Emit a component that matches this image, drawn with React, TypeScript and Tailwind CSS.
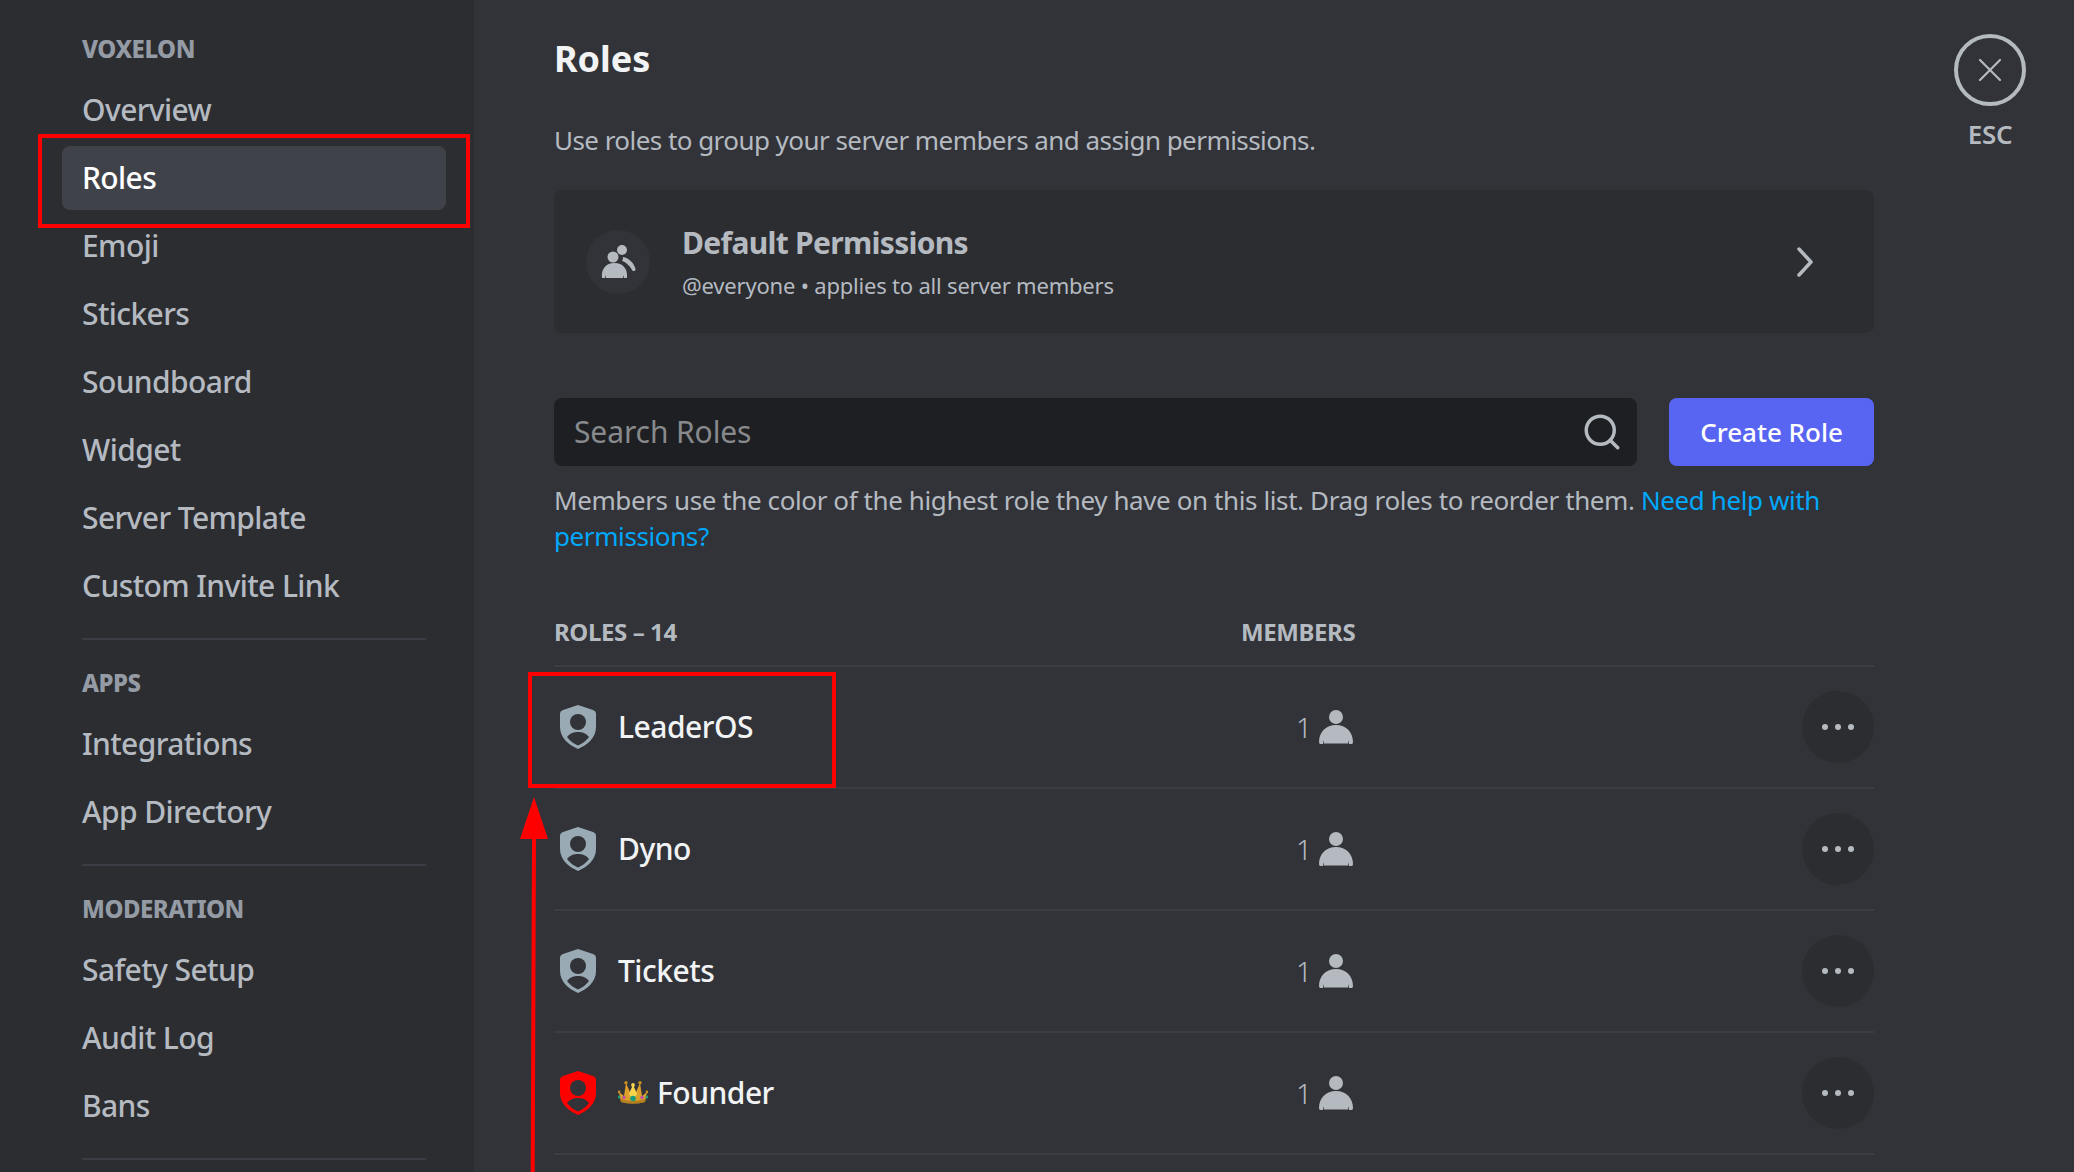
import { Search, X } from 'lucide-react';

const fontStack = 'font-["Noto_Sans","Open_Sans",sans-serif]';

const sections = [
  { title: 'VOXELON', items: ['Overview', 'Roles', 'Emoji', 'Stickers', 'Soundboard', 'Widget', 'Server Template', 'Custom Invite Link'] },
  { title: 'APPS', items: ['Integrations', 'App Directory'] },
  { title: 'MODERATION', items: ['Safety Setup', 'Audit Log', 'Bans'] },
];

const roles = [
  { name: 'LeaderOS', color: '#99aab5' },
  { name: 'Dyno', color: '#99aab5' },
  { name: 'Tickets', color: '#99aab5' },
  { name: 'Founder', color: '#ff0000', crown: true },
];

function Shield({ color }: { color: string }) {
  return (
    <svg width="36" height="44" viewBox="0 0 36 44" className="shrink-0">
      <path d="M18 0 L33 5 Q36 6 36 9 V22 C36 33 27 40 18 44 C9 40 0 33 0 22 V9 Q0 6 3 5 Z" fill={color} />
      <circle cx="18" cy="17" r="8" fill="#313338" />
      <path d="M7 32 C10 28 14 27 18 27 C22 27 26 28 29 32 C26 36 22 39 18 40.5 C14 39 10 36 7 32 Z" fill="#313338" />
    </svg>
  );
}

function Crown() {
  return (
    <svg width="30" height="23" viewBox="0 0 30 23" className="shrink-0">
      <path d="M1 11 L6 15 L8 2 L12 11 L15 4 L18 11 L22 2 L24 15 L29 11 L27 21 Q15 24 3 21 Z" fill="#dca02a" />
      <path d="M15 4 L19 13 L15 19 L11 13 Z" fill="#f7d64e" />
      <path d="M2.5 18 Q15 22 27.5 18 L27 21 Q15 24 3 21 Z" fill="#b47f1e" />
      <circle cx="15" cy="17.5" r="2.8" fill="#1c9c7c" />
      <circle cx="6" cy="16.5" r="1.7" fill="#c34fa8" />
      <circle cx="24" cy="16.5" r="1.7" fill="#c34fa8" />
      <circle cx="1" cy="16" r="1.5" fill="#1c9c7c" />
      <circle cx="29" cy="16" r="1.5" fill="#1c9c7c" />
      <circle cx="15" cy="4" r="1.9" fill="#f7d64e" />
      <circle cx="8" cy="1.8" r="1.7" fill="#c98f1f" />
      <circle cx="22" cy="1.8" r="1.7" fill="#c98f1f" />
      <circle cx="1" cy="11" r="1.4" fill="#c98f1f" />
      <circle cx="29" cy="11" r="1.4" fill="#c98f1f" />
    </svg>
  );
}

function Person() {
  return (
    <svg width="34" height="34" viewBox="0 0 34 34" className="shrink-0">
      <circle cx="17" cy="7" r="7" fill="#b5bac1" />
      <path d="M0 32 C0 22 7 15 17 15 C27 15 34 22 34 32 Q34 34 32.5 34 L30 34 L29.5 30 L29 33.5 H5 L4.5 30 L4 34 L1.5 34 Q0 34 0 32 Z" fill="#b5bac1" />
    </svg>
  );
}

// drawn in the 64px circle's own coordinates
function People() {
  return (
    <svg width="64" height="64" viewBox="0 0 64 64">
      <circle cx="27" cy="27" r="5.5" fill="#b5bac1" />
      <circle cx="36" cy="20" r="5" fill="#b5bac1" />
      <path d="M16 48 C15 39 20 33 28.5 33 C37 33 42 39 41 48 H38 L37.5 45 L37 48 H20 L19.5 45 L19 48 Z" fill="#b5bac1" />
      <path d="M37 27 C43 28 48 33 49.5 39 C50 41 47 42 46 40 C44 36 40 32 36 31 C37 30 37 28 37 27 Z" fill="#b5bac1" />
    </svg>
  );
}

export default function App() {
  return (
    <div className={`relative flex h-[1172px] w-[2074px] overflow-hidden bg-[#313338] ${fontStack}`}>
      {/* sidebar */}
      <div className="w-[474px] shrink-0 bg-[#2b2d31] pl-[62px] pt-[32px]">
        <div className="w-[384px]">
          {sections.map((s) => (
            <div key={s.title} className="mb-[26px]">
              <div className="mb-[12px] flex h-[34px] items-center pl-[20px] text-[24px] font-extrabold tracking-[-0.5px] text-[#949ba4]">{s.title}</div>
              {s.items.map((item) => (
                <div
                  key={item}
                  className={
                    item === 'Roles'
                      ? 'mb-[4px] flex h-[64px] items-center rounded-lg bg-[#404249] px-[20px] pb-[2px] text-[30px] font-medium tracking-[-0.6px] text-white'
                      : 'mb-[4px] flex h-[64px] items-center px-[20px] pb-[2px] text-[30px] font-medium tracking-[-0.6px] text-[#b5bac1]'
                  }
                >
                  {item}
                </div>
              ))}
              <div className="mx-[20px] mt-[20px] h-[2px] bg-[#3b3d44]" />
            </div>
          ))}
        </div>
      </div>

      {/* main */}
      <div className="ml-[80px] w-[1320px] shrink-0 pt-[37px]">
        <div className="flex h-[44px] items-center text-[36px] font-bold text-[#f2f3f5]">Roles</div>
        <div className="mt-[39px] flex h-[40px] items-center text-[26px] tracking-[-0.55px] text-[#b5bac1]">Use roles to group your server members and assign permissions.</div>

        <div className="mt-[30px] flex h-[143px] items-center rounded-lg bg-[#2b2d31] pl-[32px] pr-[61px]">
          <div className="flex h-[64px] w-[64px] shrink-0 items-center justify-center rounded-full bg-[#313338]">
            <People />
          </div>
          <div className="ml-[32px] flex-1">
            <div className="text-[30px] font-bold leading-[40px] tracking-[-0.7px] text-[#b5bac1]">Default Permissions</div>
            <div className="mt-[6px] text-[22px] leading-[32px] tracking-[-0.2px] text-[#b5bac1]">@everyone • applies to all server members</div>
          </div>
          <svg width="16" height="30" viewBox="0 0 16 30" fill="none" className="shrink-0">
            <path d="M2 2 L14 15 L2 28" stroke="#b5bac1" strokeWidth="3.5" strokeLinecap="round" strokeLinejoin="round" />
          </svg>
        </div>

        <div className="mt-[65px] flex h-[68px] gap-[32px]">
          <div className="flex flex-1 items-center rounded-lg bg-[#1e1f22] pl-[20px] pr-[14px]">
            <span className="flex-1 pb-[2px] text-[30px] tracking-[-0.1px] text-[#87898c]">Search Roles</span>
            <Search size={42} strokeWidth={2} className="text-[#b5bac1]" />
          </div>
          <div className="flex w-[205px] items-center justify-center rounded-lg bg-[#5865f2] text-[26px] font-medium text-white">Create Role</div>
        </div>

        <div className="mt-[16px] text-[26px] leading-[36px] tracking-[-0.4px] text-[#b5bac1]">
          Members use the color of the highest role they have on this list. Drag roles to reorder them. <span className="text-[#00a8fc]">Need help with permissions?</span>
        </div>

        <div className="mt-[58px] grid h-[40px] grid-cols-[687px_1fr] items-center text-[24px] font-bold tracking-[-0.4px] text-[#b5bac1]">
          <div>ROLES – 14</div>
          <div>MEMBERS</div>
        </div>

        <div className="mt-[13px]">
          {roles.map((r) => (
            <div key={r.name} className="flex h-[122px] items-center border-t-2 border-[#3b3d44]">
              <div className="flex w-[742px] items-center pl-[6px]">
                <Shield color={r.color} />
                <div className="ml-[22px] flex items-center pb-[2px] text-[30px] font-medium tracking-[-0.5px] text-[#f2f3f5]">
                  {r.crown && <span className="mr-[9px]"><Crown /></span>}
                  {r.name}
                </div>
              </div>
              <div className="flex flex-1 items-center">
                <span className="w-[23px] text-[28px] font-light text-[#b5bac1]">1</span>
                <Person />
              </div>
              <div className="flex h-[72px] w-[72px] items-center justify-center gap-[7px] rounded-full bg-[#2b2d31]">
                <span className="h-[6px] w-[6px] rounded-full bg-[#b5bac1]" />
                <span className="h-[6px] w-[6px] rounded-full bg-[#b5bac1]" />
                <span className="h-[6px] w-[6px] rounded-full bg-[#b5bac1]" />
              </div>
            </div>
          ))}
          <div className="border-t-2 border-[#3b3d44]" />
        </div>
      </div>

      {/* esc */}
      <div className="ml-[80px] flex w-[72px] shrink-0 flex-col items-center pt-[34px]">
        <div className="flex h-[72px] w-[72px] shrink-0 items-center justify-center rounded-full border-4 border-[#b5bac1]">
          <X size={40} strokeWidth={1.3} className="text-[#b5bac1]" />
        </div>
        <div className="mt-[13px] text-[26px] font-semibold leading-[30px] tracking-[-0.3px] text-[#b5bac1]">ESC</div>
      </div>

      {/* annotations */}
      <div className="absolute left-[38px] top-[134px] h-[94px] w-[432px] border-4 border-[#ff0000]" />
      <div className="absolute left-[528px] top-[672px] h-[116px] w-[308px] border-4 border-[#ff0000]" />
      <svg className="absolute left-[516px] top-[795px]" width="36" height="377" viewBox="0 0 36 377">
        <path d="M18 2 L32 44 H20 L18.7 377 H14.7 L16 44 H4 Z" fill="#ff0000" />
      </svg>
    </div>
  );
}
